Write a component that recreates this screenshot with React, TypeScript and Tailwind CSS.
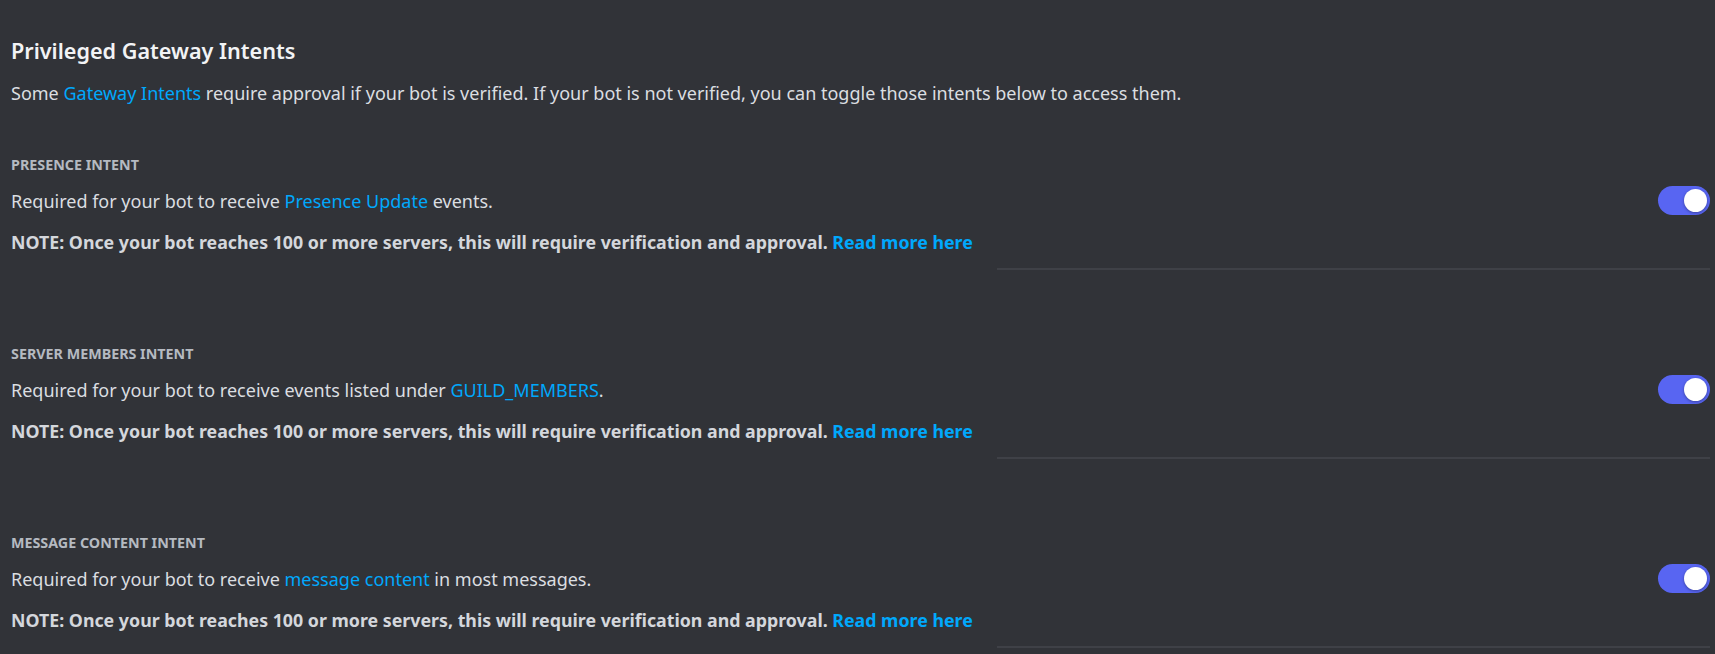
const intents = [
  {
    label: "PRESENCE INTENT",
    before: "Required for your bot to receive ",
    link: "Presence Update",
    after: " events.",
  },
  {
    label: "SERVER MEMBERS INTENT",
    before: "Required for your bot to receive events listed under ",
    link: "GUILD_MEMBERS",
    after: ".",
  },
  {
    label: "MESSAGE CONTENT INTENT",
    before: "Required for your bot to receive ",
    link: "message content",
    after: " in most messages.",
  },
];

function Toggle() {
  return (
    <div className="flex h-[29px] w-[52px] shrink-0 items-center justify-end rounded-full bg-[#5865f2] px-[3px]">
      <div className="size-[23px] rounded-full bg-white shadow-[0_1px_3px_rgba(0,0,0,0.35)]" />
    </div>
  );
}

export default function App() {
  return (
    <div
      className="h-[654px] overflow-hidden bg-[#313338] pl-[11px] pr-[5px] pt-[36px] text-[#dbdee1]"
      style={{ fontFamily: '"Noto Sans", "Open Sans", sans-serif' }}
    >
      <h2 className="text-[21.6px] font-semibold leading-[30px] text-[#f2f3f5]">Privileged Gateway Intents</h2>
      <p className="mt-[15px] text-[18px] leading-[24px] text-[#dbdee1]">
        Some <span className="text-[#00a8fc]">Gateway Intents</span> require approval if your bot is verified. If your
        bot is not verified, you can toggle those intents below to access them.
      </p>
      <div className="mt-[51px] flex flex-col gap-[75px]">
        {intents.map((item) => (
          <section key={item.label}>
            <div className="text-[14.3px] font-bold leading-[18px] text-[#b5bac1]">{item.label}</div>
            <div className="mt-[12px] flex items-center justify-between">
              <p className="text-[18px] leading-[24px]">
                {item.before}
                <span className="text-[#00a8fc]">{item.link}</span>
                {item.after}
              </p>
              <Toggle />
            </div>
            <p className="mt-[15px] text-[17.8px] font-bold leading-[24px] text-[#d4d7dc]">
              NOTE: Once your bot reaches 100 or more servers, this will require verification and approval.{" "}
              <span className="text-[#00a8fc]">Read more here</span>
            </p>
            <div className="mt-[14px] ml-auto h-[2px] w-[713px] bg-[#3f4147]" />
          </section>
        ))}
      </div>
    </div>
  );
}
